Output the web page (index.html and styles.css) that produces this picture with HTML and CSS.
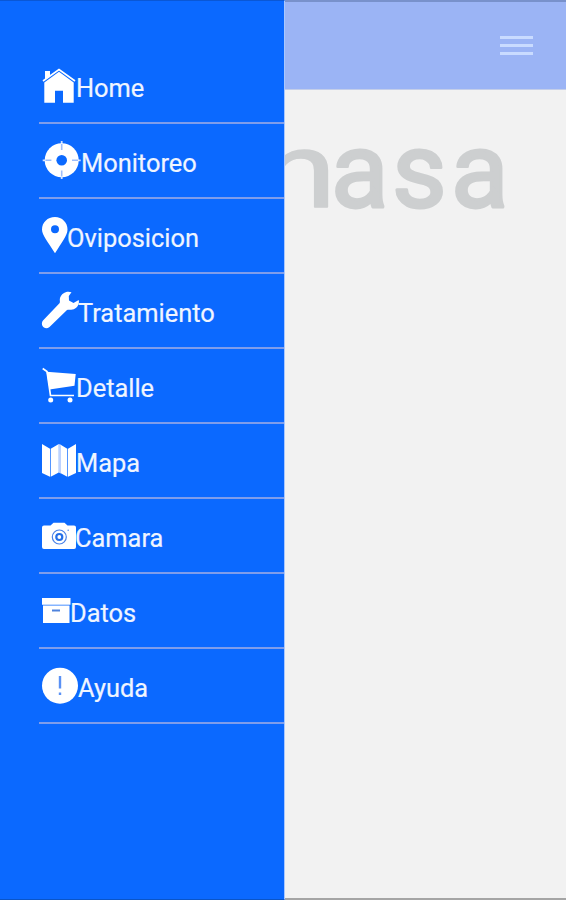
FILE: index.html
```html
<!DOCTYPE html>
<html lang="es">
<head>
<meta charset="utf-8">
<title>Menu</title>
<link rel="stylesheet" href="styles.css">
</head>
<body>
<div class="app">
  <nav class="drawer">
    <ul class="menu">
      <li class="item"><svg width="37" height="44"><path d="M6 17V8h5v5"/><path class="line" d="M4 18 20 6.500 36 18"/><path d="M20 8.800 34.700 19.500v20.200H24v-12h-8v12H5.300V19.500z"/></svg><span>Home</span></li>
      <li class="item"><svg width="42" height="44"><path class="tick" d="M22.700 3v38M3.700 22.300h38"/><circle cx="22.700" cy="22.300" r="17"/><path class="cut" d="M22.700 6v6M22.700 32.600v6M6.400 22.300h6M33 22.300h6"/><circle class="hole" cx="22.700" cy="22.300" r="5.300"/></svg><span>Monitoreo</span></li>
      <li class="item"><svg width="28" height="44"><path fill-rule="evenodd" d="M16 4C8.500 4 3 9.500 3 16.500c0 6 6 12 13 23.800 7-11.800 12.500-17.800 12.500-23.800C28.500 9.500 23 4 16 4zm0 8.300a4 4 0 1 1 0 8 4 4 0 0 1 0-8z"/></svg><span>Oviposicion</span></li>
      <li class="item"><svg width="39" height="44"><path d="M32.500 4.300C28 2.500 22.500 5 21 10c-.6 2 .3 3.500-.3 5L4 32.500c-3.500 4.500 2 10.500 6.500 6.500L28 22c2-.8 4.500.3 6.800-.7 3.500-1.500 6-5.500 4.900-9.300L34.500 15 30 12.500 29.800 8z"/></svg><span>Tratamiento</span></li>
      <li class="item"><svg width="37" height="44"><path class="line" d="M3.700 5.500 8 8.500l3.500 24H35"/><path d="M7.500 8.700 36.700 11l-1.200 11.700L10.500 26.500z"/><circle cx="11.700" cy="37" r="2.500"/><circle cx="31" cy="37" r="2.500"/></svg><span>Detalle</span></li>
      <li class="item"><svg width="37" height="44"><path d="M3 6l8 4.700v28L3 35zM11.700 10.700 19.800 6v28.500l-8.100 4.200zM20.400 6l7.900 4.700v28l-7.900-4.200zM29 10.700 37 6v29l-8 3.700z"/><path class="fold" d="M20 6.500v28l2 1V7.500z"/></svg><span>Mapa</span></li>
      <li class="item"><svg width="36" height="44"><path d="M5 12.500h6.500l3-2.800h11l3 2.800H35q2 0 2 2V34q0 2-2 2H5q-2 0-2-2V14.500q0-2 2-2z"/><circle class="lens" cx="20.300" cy="24" r="7"/><circle class="hub" cx="20.300" cy="24" r="3"/><circle class="dot" cx="29.200" cy="17.300" r=".8"/></svg><span>Camara</span></li>
      <li class="item"><svg width="31" height="44"><path d="M3 10h28.500v6.800H3zM4 17.500h26.500V35H4z"/><path class="handle" d="M13 22.500h8"/></svg><span>Datos</span></li>
      <li class="item"><svg width="39" height="44"><circle cx="21" cy="22.700" r="18"/><path class="mark" d="M21 13v12.500M21 29.500v2.500"/></svg><span>Ayuda</span></li>
    </ul>
  </nav>
  <main class="content">
    <header class="topbar">
      <svg class="burger" width="33" height="20"><path d="M0 1.500h33M0 9.500h33M0 17.500h33"/></svg>
    </header>
    <svg class="brand" width="281" height="90"><text class="wide" transform="translate(-23.500 68.500) scale(1.280 1)">n</text><text y="68.500" x="46 107 166">asa</text></svg>
  </main>
</div>
</body>
</html>
```
FILE: styles.css
```css
* { box-sizing: border-box; }
body { margin: 0; font-family: Roboto, sans-serif; }
.app {
  display: flex;
  width: 566px;
  height: 900px;
  background: #f2f2f2;
  box-shadow: inset 0 -2px #a5a5a5;
  overflow: hidden;
}
.drawer {
  width: 285px;
  padding: 48px 1px 0 39px;
  background: #0b69ff;
  border-top: 1px solid #0a57d5;
  border-bottom: 1px solid #0a55c8;
  border-right: 1px solid #a9c8ff;
}
.menu { margin: 0 -1px 0 0; padding: 0; list-style: none; }
.item {
  display: flex;
  height: 75px;
  padding-top: 14px;
  border-bottom: 2px solid #7f9deb;
  color: #f0f5ff;
  font-size: 25.4px;
  line-height: 30px;
  white-space: nowrap;
  -webkit-text-stroke: 0.2px #f0f5ff;
}
.item svg { flex: none; overflow: visible; fill: #fff; }
.item span { padding-top: 10px; }
.item .line { fill: none; stroke: #fff; stroke-width: 1.7; }
.item .hole { fill: #0b69ff; }
.item .tick { stroke: #cfe0ff; stroke-width: 1.8; }
.item .cut { stroke: #9dbdfa; stroke-width: 1.6; }
.item .fold { fill: #bdd2ff; }
.item .lens { fill: none; stroke: #4a82e8; stroke-width: 1.2; }
.item .hub { fill: #fff; stroke: #246fe8; stroke-width: 2.2; }
.item .dot { fill: #5b8ff0; }
.item .handle { stroke: #4f83dc; stroke-width: 2; }
.item .mark { stroke: #5a91f5; stroke-width: 2.4; }
.content { flex: 1; }
.topbar {
  display: flex;
  justify-content: flex-end;
  height: 90px;
  padding: 34px 33px 0 0;
  background: #9bb4f5;
  border-top: 2px solid #7891cb;
  border-bottom: 1px solid #c4cee9;
}
.burger { stroke: #c9dbff; stroke-width: 3; }
.brand { display: block; margin-top: 48px; overflow: hidden; }
.brand text {
  font-family: Roboto, sans-serif;
  font-size: 106px;
  fill: #cdcfd0;
  stroke: #cdcfd0;
  stroke-width: 3;
  stroke-linejoin: round;
}
.brand .wide { stroke-width: 1.500; }
```
